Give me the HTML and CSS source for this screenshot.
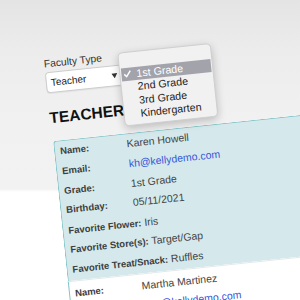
FILE: index.html
```html
<!DOCTYPE html>
<html lang="en">
<head>
<meta charset="utf-8">
<title>Faculty</title>
<link rel="stylesheet" href="styles.css">
</head>
<body>
<div class="scene">
  <div class="field-label">Faculty Type</div>
  <div class="select">
    <span>Teacher</span>
    <svg class="arrow" width="6" height="5" viewBox="0 0 6 5"><polygon points="0,0 6,0 3,5" fill="#333"/></svg>
  </div>
  <h1 class="heading">TEACHER</h1>

  <div class="cards">
    <div class="card card-blue">
      <div class="lbl">Name:</div><div class="val">Karen Howell</div>
      <div class="lbl">Email:</div><div class="val link">kh@kellydemo.com</div>
      <div class="lbl">Grade:</div><div class="val">1st Grade</div>
      <div class="lbl">Birthday:</div><div class="val">05/11/2021</div>
      <div class="wide"><b>Favorite Flower:</b> Iris</div>
      <div class="wide"><b>Favorite Store(s):</b> Target/Gap</div>
      <div class="wide"><b>Favorite Treat/Snack:</b> Ruffles</div>
    </div>
    <div class="card card-white">
      <div class="lbl">Name:</div><div class="val">Martha Martinez</div>
      <div class="lbl">Email:</div><div class="val link">mm@kellydemo.com</div>
    </div>
  </div>

  <div class="menu">
    <div class="item selected">
      <svg class="check" width="8" height="8" viewBox="0 0 8 8"><polyline points="0.8,4.2 3,6.6 7.2,1" fill="none" stroke="#fff" stroke-width="1.4"/></svg>
      <span>1st Grade</span>
    </div>
    <div class="item"><span></span><span>2nd Grade</span></div>
    <div class="item"><span></span><span>3rd Grade</span></div>
    <div class="item"><span></span><span>Kindergarten</span></div>
  </div>
</div>
</body>
</html>
```

FILE: styles.css
```css
html, body {
  margin: 0;
  padding: 0;
  width: 300px;
  height: 300px;
  overflow: hidden;
}
body {
  font-family: "Liberation Sans", Arial, Helvetica, sans-serif;
  background: linear-gradient(180deg, #e4e4e4 0px, #ececec 50px, #f1f1f1 120px, #f2f2f2 189px, #ffffff 192px);
}
.scene {
  position: relative;
  box-sizing: border-box;
  width: 460px;
  padding: 58px 0 0 52px;
  transform-origin: 53px 141px;
  transform: rotate(-6deg);
}
.field-label {
  font-size: 10.3px;
  line-height: 12px;
  color: #333;
}
.select {
  box-sizing: border-box;
  margin-top: 1.5px;
  width: 78px;
  height: 21px;
  border: 1px solid #cdcdcd;
  border-radius: 4px;
  background: #fff;
  display: flex;
  align-items: center;
  justify-content: space-between;
  padding: 0 5px 0 4px;
  font-size: 10px;
  color: #222;
  box-shadow: 0 1px 1px rgba(0,0,0,0.05);
}
.arrow { display: block; }
.heading {
  margin: 16.5px 0 0 0;
  font-size: 15.5px;
  line-height: 18px;
  font-weight: bold;
  color: #111;
}
.cards {
  margin: 14px 0 0 1px;
  width: 400px;
}
.card {
  display: grid;
  grid-template-columns: 67px 1fr;
  grid-auto-rows: 19.7px;
  align-items: center;
  padding-left: 5px;
  border-left: 1.5px solid #82c4c8;
}
.card-blue {
  background: #d5e9ec;
  border-top: 1.5px solid #82c4c8;
  border-top-left-radius: 4px;
  padding-top: 0;
  padding-bottom: 2.5px;
}
.card-white {
  background: #fff;
  border-top: 1px solid #e3e9ea;
  padding-top: 1px;
}
.lbl {
  font-size: 9.5px;
  font-weight: bold;
  color: #3d3d3d;
}
.val {
  font-size: 10.5px;
  color: #444;
  margin-top: -1px;
}
.link { color: #3557d8; }
.wide {
  grid-column: 1 / 3;
  font-size: 10.5px;
  color: #444;
}
.wide b {
  font-size: 9.5px;
  color: #3d3d3d;
}
.menu {
  position: absolute;
  left: 126px;
  top: 59.5px;
  box-sizing: border-box;
  width: 94px;
  height: 74px;
  padding: 15px 0 3.5px 0;
  background: #f1f1f1;
  border: 1px solid #cfcfcf;
  border-radius: 5px;
  box-shadow: 0 3px 9px rgba(0,0,0,0.22);
}
.item {
  display: grid;
  grid-template-columns: 15px auto;
  align-items: center;
  height: 13.3px;
  margin: 0 1px;
  font-size: 10.7px;
  color: #222;
}
.item.selected {
  background: #a3a3ab;
  color: #fff;
}
.check { display: block; margin-left: 1.5px; }
```
